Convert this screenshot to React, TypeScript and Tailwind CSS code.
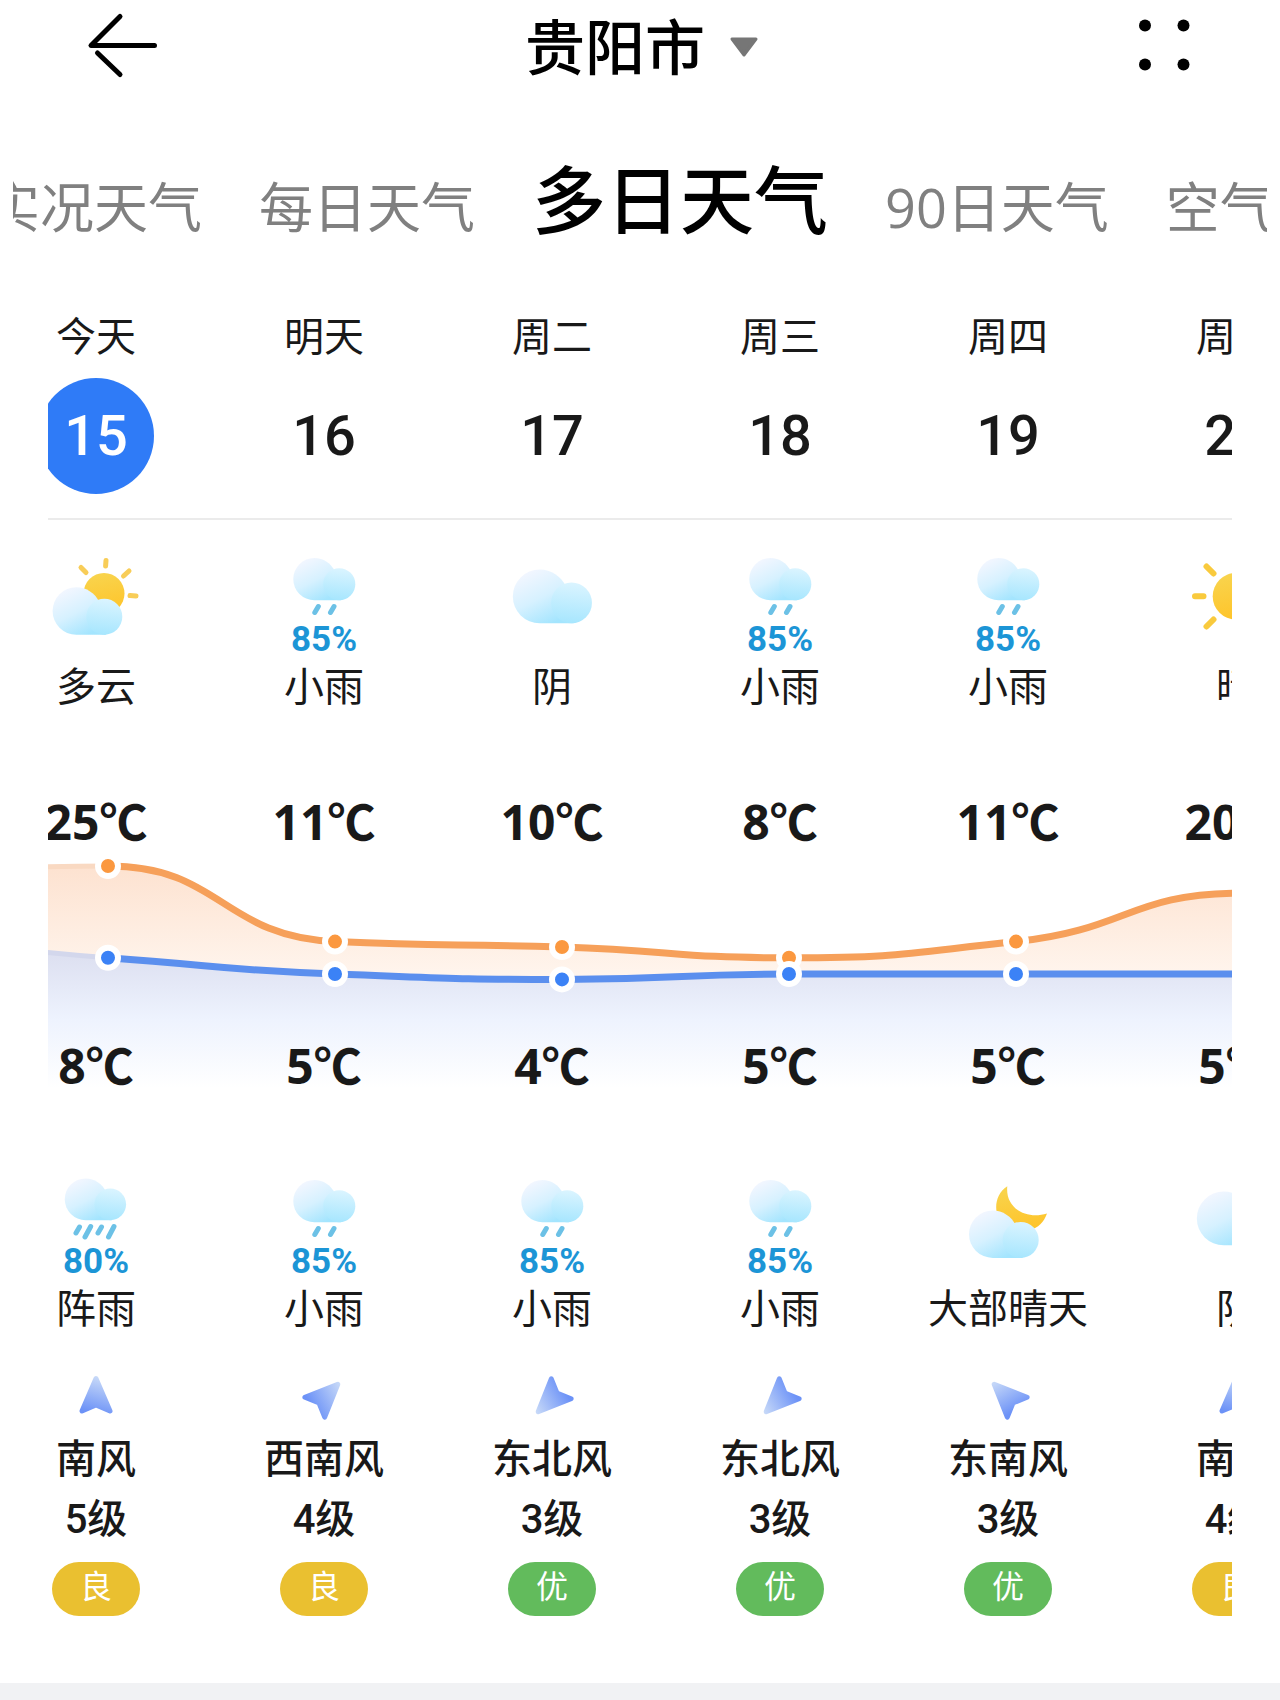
import React, { useState } from 'react';

type Sky = 'partly' | 'rain' | 'shower' | 'overcast' | 'sunny' | 'night';

interface Weather {
  sky: Sky;
  label: string;
  chance?: number;
}

interface Day {
  name: string;
  date: number;
  high: number;
  low: number;
  day: Weather;
  night: Weather;
  wind: string;
  angle: number;
  level: number;
  air: '优' | '良';
}

const tabs = ['实况天气', '每日天气', '多日天气', '90日天气', '空气质量'];

const rain: Weather = { sky: 'rain', label: '小雨', chance: 85 };
const overcast: Weather = { sky: 'overcast', label: '阴' };

const days: Day[] = [
  { name: '今天', date: 15, high: 25, low: 8, day: { sky: 'partly', label: '多云' }, night: { sky: 'shower', label: '阵雨', chance: 80 }, wind: '南风', angle: 0, level: 5, air: '良' },
  { name: '明天', date: 16, high: 11, low: 5, day: rain, night: rain, wind: '西南风', angle: 45, level: 4, air: '良' },
  { name: '周二', date: 17, high: 10, low: 4, day: overcast, night: rain, wind: '东北风', angle: 225, level: 3, air: '优' },
  { name: '周三', date: 18, high: 8, low: 5, day: rain, night: rain, wind: '东北风', angle: 225, level: 3, air: '优' },
  { name: '周四', date: 19, high: 11, low: 5, day: rain, night: { sky: 'night', label: '大部晴天' }, wind: '东南风', angle: -45, level: 3, air: '优' },
  { name: '周五', date: 20, high: 20, low: 5, day: { sky: 'sunny', label: '晴' }, night: overcast, wind: '南风', angle: 0, level: 4, air: '良' },
];

const yesterday = { high: 24, low: 11 };

function Cloud({ x, y, scale }: { x: number; y: number; scale: number }) {
  return (
    <g transform={`translate(${x} ${y}) scale(${scale})`}>
      <path d="M24 0C34 0 43 6 47 15L54 47.4H24A23.7 23.7 0 0 1 24 0Z" fill="url(#cloudBack)" />
      <circle cx="52" cy="29.4" r="18" fill="url(#cloudFront)" />
    </g>
  );
}

function SkyIcon({ sky }: { sky: Sky }) {
  const wet = sky === 'rain' || sky === 'shower';
  return (
    <svg viewBox={wet ? '0 0 96 68' : '0 0 96 88'} className={wet ? 'w-24 h-[68px]' : 'w-24 h-[88px]'} aria-hidden="true">
      {sky === 'partly' && (
        <>
          <g stroke="#f8cd58" strokeWidth="5" strokeLinecap="round">
            <path d="M58 8.5L57.6 14M33 15.5L38 20.5M81 19L75.5 24M82 43.6L88 44" />
          </g>
          <circle cx="56" cy="41.5" r="20.5" fill="url(#sun)" />
          <Cloud x={4.3} y={35.3} scale={1} />
        </>
      )}
      {sky === 'sunny' && (
        <>
          <path
            d="M7 44.3H15.5M80.5 44.3H89M48 3.3V12M48 77V85M18.5 14.5L25.5 21.5M77.5 14.5L70.5 21.5M25.5 67.5L18.5 74.5M70.5 67.5L77.5 74.5"
            stroke="#f9ca3d"
            strokeWidth="6"
            strokeLinecap="round"
          />
          <circle cx="48" cy="44.3" r="23.3" fill="url(#sun)" />
        </>
      )}
      {sky === 'night' && (
        <>
          <path d="M47.3 12.3C35 20 34 36 39 45L70 56C78 54 84 48 87 39.5C66 46 45 34 47.3 12.3Z" fill="url(#sun)" />
          <Cloud x={8.7} y={36.5} scale={1} />
        </>
      )}
      {sky === 'overcast' && <Cloud x={8.5} y={17.5} scale={1.135} />}
      {sky === 'rain' && (
        <>
          <Cloud x={17} y={6} scale={0.89} />
          <path d="M42.3 54.5L38.8 60.5M58 54.5L54.5 60.5" stroke="#6cc1e6" strokeWidth="5" strokeLinecap="round" />
        </>
      )}
      {sky === 'shower' && (
        <>
          <Cloud x={16.5} y={4.5} scale={0.88} />
          <path
            d="M31.5 53L28 59M42.7 52.5L37 63M53.5 53L50 59M66 52.5L60.5 63"
            stroke="#6cc1e6"
            strokeWidth="5"
            strokeLinecap="round"
          />
        </>
      )}
    </svg>
  );
}

function WeatherCell({ weather }: { weather: Weather }) {
  return (
    <div className="flex w-[228px] shrink-0 flex-col items-center pt-8">
      <div className="flex h-[108px] flex-col items-center">
        <SkyIcon sky={weather.sky} />
        {weather.chance && (
          <span className="font-[Roboto] text-[35px] leading-10 font-bold text-[#1c95d6]">{weather.chance}%</span>
        )}
      </div>
      <span className="text-[40px] leading-[52px]">{weather.label}</span>
    </div>
  );
}

// Chart geometry, in the units of its viewBox
const step = 227;
const pointX = (i: number) => 126 + i * step;
const pointY = (t: number) => 14 + (25 - t) * 5.4;

function curve(temps: number[]) {
  const pts = temps.map((t, i) => ({ x: pointX(i - 1), y: pointY(t) }));
  const slopes = pts.map((p, i) => {
    if (i === 0 || i === pts.length - 1) return 0;
    const a = (p.y - pts[i - 1].y) / step;
    const b = (pts[i + 1].y - p.y) / step;
    return a * b <= 0 ? 0 : (2 * a * b) / (a + b);
  });
  return pts.slice(1).map((p, i) => {
    const prev = pts[i];
    const half = step / 2;
    return `C${prev.x + half} ${prev.y + slopes[i] * half} ${p.x - half} ${p.y - slopes[i + 1] * half} ${p.x} ${p.y}`;
  });
}

function TemperatureChart() {
  // Friday is repeated so that the curves run on past the last point
  const highs = [yesterday.high, ...days.map((d) => d.high), 20];
  const lows = [yesterday.low, ...days.map((d) => d.low), 5];

  const renderSeries = (temps: number[], line: string, past: string, dot: string) => {
    const parts = curve(temps);
    return (
      <g fill="none">
        <path d={`M${pointX(-1)} ${pointY(temps[0])}${parts[0]}`} stroke={past} strokeWidth="5" />
        <path d={`M${pointX(0)} ${pointY(temps[1])}${parts.slice(1).join('')}`} stroke={line} strokeWidth="7" />
        {temps.slice(1, 6).map((t, i) => (
          <circle key={i} cx={pointX(i)} cy={pointY(t)} r="10" fill={dot} stroke="#fff" strokeWidth="6" />
        ))}
      </g>
    );
  };

  const highArea = `M${pointX(-1)} ${pointY(highs[0])}${curve(highs).join('')}V244H${pointX(-1)}Z`;
  const lowArea = `M${pointX(-1)} ${pointY(lows[0])}${curve(lows).join('')}V244H${pointX(-1)}Z`;

  return (
    <svg viewBox="0 0 1368 244" className="block h-[244px] w-[1368px]" role="img" aria-label="气温曲线">
      <path d={highArea} fill="url(#highArea)" />
      <path d={lowArea} fill="#fff" />
      <path d={lowArea} fill="url(#lowArea)" />
      {renderSeries(highs, '#f6a05a', '#f9d9c2', '#fb983f')}
      {renderSeries(lows, '#5b8fee', '#d3d7ec', '#3b82f6')}
    </svg>
  );
}

function Gradients() {
  return (
    <svg className="absolute h-0 w-0" aria-hidden="true">
      <defs>
        <linearGradient id="cloudBack" gradientUnits="userSpaceOnUse" x1="12" y1="4" x2="34" y2="48">
          <stop offset="0" stopColor="#f1f6ff" />
          <stop offset="0.5" stopColor="#d6f1ff" />
          <stop offset="1" stopColor="#a4e5fe" />
        </linearGradient>
        <linearGradient id="cloudFront" x1="0.4" y1="0" x2="0.3" y2="1">
          <stop offset="0" stopColor="#daf4ff" />
          <stop offset="1" stopColor="#a6e6fe" />
        </linearGradient>
        <linearGradient id="sun" x1="0" y1="0" x2="0.2" y2="1">
          <stop offset="0" stopColor="#f8d550" />
          <stop offset="1" stopColor="#fec52c" />
        </linearGradient>
        <linearGradient id="wind" gradientUnits="userSpaceOnUse" x1="26" y1="0" x2="16" y2="36">
          <stop offset="0" stopColor="#cbdcf8" />
          <stop offset="1" stopColor="#6c92f7" />
        </linearGradient>
        <linearGradient id="highArea" gradientUnits="userSpaceOnUse" x1="0" y1="14" x2="0" y2="130">
          <stop offset="0" stopColor="#fde2d0" />
          <stop offset="1" stopColor="#fff6ef" />
        </linearGradient>
        <linearGradient id="lowArea" gradientUnits="userSpaceOnUse" x1="0" y1="100" x2="0" y2="236">
          <stop offset="0" stopColor="#dcdff0" />
          <stop offset="0.5" stopColor="#eef3fe" />
          <stop offset="1" stopColor="#ffffff" />
        </linearGradient>
      </defs>
    </svg>
  );
}

export default function App() {
  const [tab, setTab] = useState('多日天气');
  const [selected, setSelected] = useState(15);

  return (
    <div className="min-h-screen overflow-hidden bg-white font-['Open_Sans','Noto_Sans_CJK_SC',sans-serif] text-[#191919]">
      <Gradients />

      {/* Header */}
      <header className="grid h-[90px] grid-cols-[1fr_auto_1fr] items-center px-[84px] text-black">
        <button aria-label="返回" className="justify-self-start">
          <svg viewBox="0 0 76 68" className="h-[68px] w-[76px]" fill="none" stroke="currentColor" strokeWidth="5" strokeLinecap="round" strokeLinejoin="round">
            <path d="M36 5.5L7 34.5H70.5M13.5 42L36 63.5" />
          </svg>
        </button>
        <button className="flex items-center gap-6 pt-1 pl-1 text-[60px] leading-[86px] font-medium">
          贵阳市
          <svg viewBox="0 0 30 22" className="h-[22px] w-[30px]" aria-hidden="true">
            <path d="M3 3H27L15 19Z" fill="#767676" stroke="#767676" strokeWidth="3" strokeLinejoin="round" />
          </svg>
        </button>
        <button aria-label="更多" className="justify-self-end">
          <svg viewBox="0 0 64 56" className="h-14 w-16" fill="currentColor">
            <circle cx="13" cy="8.5" r="6" />
            <circle cx="51.5" cy="8.5" r="6" />
            <circle cx="13" cy="47.5" r="6" />
            <circle cx="51.5" cy="47.5" r="6" />
          </svg>
        </button>
      </header>

      {/* Tabs */}
      <nav className="mx-[13px] overflow-hidden pt-[57px]">
        <div className="-ml-[27px] flex items-baseline gap-[57px] whitespace-nowrap">
          {tabs.map((item) => (
            <button
              key={item}
              onClick={() => setTab(item)}
              className={`shrink-0 ${
                item === tab ? 'text-[74px] leading-[106px] font-medium text-black' : 'text-[54px] leading-[106px] text-[#808080]'
              }`}
            >
              {item}
            </button>
          ))}
        </div>
      </nav>

      {/* Forecast strip, scrolled a little to the left */}
      <main className="mx-12 mt-12 overflow-hidden">
        <div className="-ml-[66px] w-[1368px]">
          <div className="flex">
            {days.map((d) => (
              <button key={d.date} onClick={() => setSelected(d.date)} className="flex w-[228px] shrink-0 flex-col items-center gap-[14px]">
                <span className="text-[40px] leading-[56px]">{d.name}</span>
                <span
                  className={`flex h-[116px] w-[116px] items-center justify-center rounded-full font-[Roboto] text-[56px] font-medium ${
                    d.date === selected ? 'bg-[#2f7bf7] text-white' : ''
                  }`}
                >
                  {d.date}
                </span>
              </button>
            ))}
          </div>

          <div className="mt-6 flex border-t-2 border-[#ebebeb]">
            {days.map((d) => (
              <WeatherCell key={d.date} weather={d.day} />
            ))}
          </div>

          {/* Temperatures */}
          <div className="mt-20 flex text-center text-[48px] leading-[60px] font-bold">
            {days.map((d) => (
              <span key={d.date} className="w-[228px] shrink-0">{d.high}℃</span>
            ))}
          </div>
          <TemperatureChart />
          <div className="relative -mt-[60px] flex text-center text-[48px] leading-[60px] font-bold">
            {days.map((d) => (
              <span key={d.date} className="w-[228px] shrink-0">{d.low}℃</span>
            ))}
          </div>

          <div className="mt-[46px] flex">
            {days.map((d) => (
              <WeatherCell key={d.date} weather={d.night} />
            ))}
          </div>

          {/* Wind and air quality */}
          <div className="mt-[42px] flex">
            {days.map((d) => (
              <div key={d.date} className="flex w-[228px] shrink-0 flex-col items-center font-[Roboto,'Noto_Sans_CJK_SC',sans-serif] text-[40px] leading-[60px] font-medium">
                <svg viewBox="0 0 44 44" className="mb-[10px] h-11 w-11 overflow-visible" aria-hidden="true">
                  <path
                    d="M22 2.5L36 35L22 29L8 35Z"
                    transform={`rotate(${d.angle} 22 22)`}
                    fill="url(#wind)"
                    stroke="url(#wind)"
                    strokeWidth="5"
                    strokeLinejoin="round"
                  />
                </svg>
                <span>{d.wind}</span>
                <span>{d.level}级</span>
                <span
                  className={`mt-3 flex h-[54px] w-[88px] items-center justify-center rounded-full pb-1 text-[32px] font-normal text-white ${
                    d.air === '优' ? 'bg-[#62bb5c]' : 'bg-[#eac030]'
                  }`}
                >
                  {d.air}
                </span>
              </div>
            ))}
          </div>
        </div>
      </main>

      <div className="mt-[67px] h-8 bg-[#f1f2f4]" />
    </div>
  );
}
